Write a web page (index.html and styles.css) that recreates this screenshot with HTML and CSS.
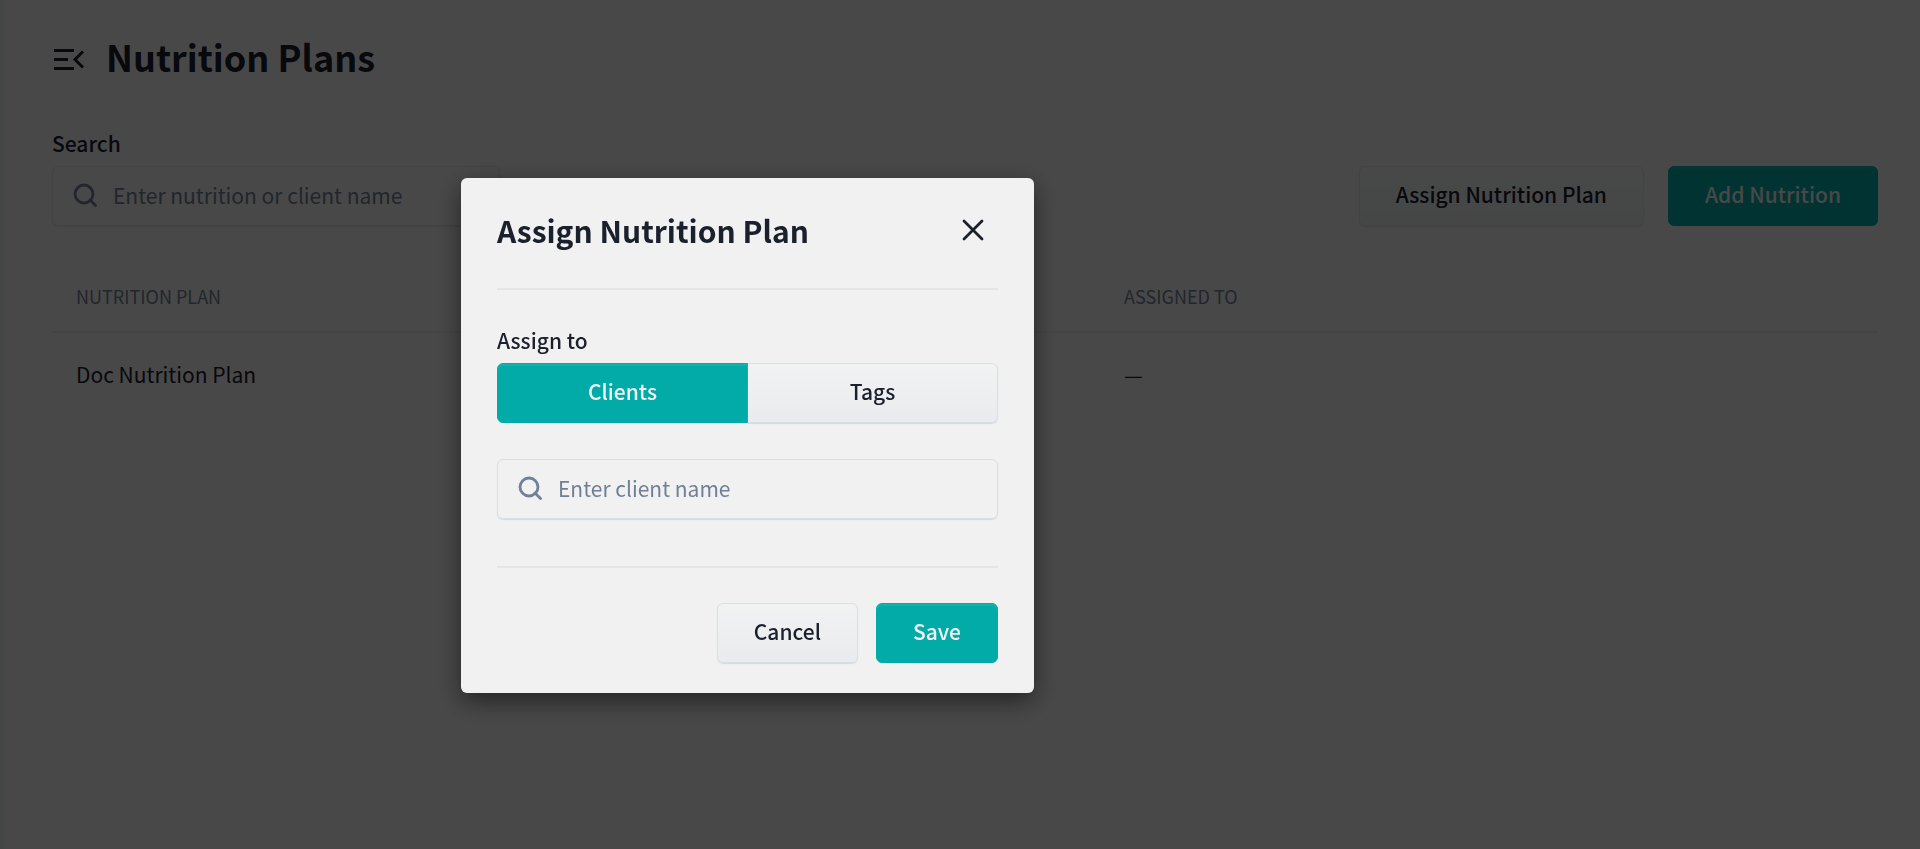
FILE: index.html
```html
<!DOCTYPE html>
<html lang="en">
<head>
    <meta charset="UTF-8">
    <meta name="viewport" content="width=device-width, initial-scale=1.0">
    <title>Nutrition Plans</title>
    <link rel="stylesheet" href="styles.css">
</head>
<body>

<main class="page">
    <header class="page-header">
        <button class="icon-button" aria-label="Toggle menu">
            <svg class="menu-icon" viewBox="0 0 30 22" fill="none" stroke="currentColor" stroke-width="3">
                <path d="M0 1.5h20M0 10.5h14M0 19.5h20"/>
                <path d="M29 2.5l-8 8 8 8"/>
            </svg>
        </button>
        <h1>Nutrition Plans</h1>
    </header>

    <div class="toolbar">
        <div class="search-field">
            <label class="label" for="planSearch">Search</label>
            <div class="input-group">
                <svg class="search-icon" viewBox="0 0 24 24" fill="none" stroke="currentColor" stroke-width="2.8">
                    <circle cx="11" cy="11" r="9"/>
                    <path d="M17 17l5.5 5.5" stroke-linecap="round"/>
                </svg>
                <input type="text" id="planSearch" placeholder="Enter nutrition or client name">
            </div>
        </div>
        <div class="actions">
            <button class="button">Assign Nutrition Plan</button>
            <button class="button button-primary">Add Nutrition</button>
        </div>
    </div>

    <table class="plans">
        <thead>
            <tr>
                <th>Nutrition Plan</th>
                <th>Assigned To</th>
            </tr>
        </thead>
        <tbody>
            <tr>
                <td>Doc Nutrition Plan</td>
                <td>—</td>
            </tr>
        </tbody>
    </table>
</main>

<div class="overlay">
    <div class="modal" role="dialog" aria-labelledby="modalTitle">
        <div class="modal-header">
            <h2 id="modalTitle">Assign Nutrition Plan</h2>
            <button class="icon-button close-button" aria-label="Close">
                <svg class="close-icon" viewBox="0 0 22 22" fill="none" stroke="currentColor" stroke-width="2.8" stroke-linecap="round">
                    <path d="M2 2l18 18M20 2L2 20"/>
                </svg>
            </button>
        </div>

        <div class="modal-body">
            <div class="label" id="assignLabel">Assign to</div>
            <div class="segmented" role="group" aria-labelledby="assignLabel">
                <button class="button button-primary">Clients</button>
                <button class="button">Tags</button>
            </div>
            <div class="input-group">
                <svg class="search-icon" viewBox="0 0 24 24" fill="none" stroke="currentColor" stroke-width="2.8">
                    <circle cx="11" cy="11" r="9"/>
                    <path d="M17 17l5.5 5.5" stroke-linecap="round"/>
                </svg>
                <input type="text" id="clientSearch" placeholder="Enter client name" aria-label="Client name">
            </div>
        </div>

        <div class="modal-footer">
            <button class="button">Cancel</button>
            <button class="button button-primary">Save</button>
        </div>
    </div>
</div>

</body>
</html>
```
FILE: styles.css
```css
* {
    box-sizing: border-box;
}

body {
    margin: 0;
    min-height: 100vh;
    background-color: #f1f1f1;
    border-left: 4px solid #e3ecea;
    color: #1a202c;
    font-family: "Noto Sans CJK SC", "Noto Sans", sans-serif;
    font-size: 21px;
    line-height: 30px;
}

h1, h2 {
    margin: 0;
    font-weight: 700;
}

h1 {
    padding-bottom: 8px;
    font-size: 36px;
    line-height: 36px;
}

h2 {
    font-size: 30px;
    line-height: 40px;
}

button, input {
    font: inherit;
    color: inherit;
}

.page {
    padding: 38px 42px 36px 48px;
}

.page-header {
    display: flex;
    align-items: center;
    gap: 22px;
}

.icon-button {
    display: flex;
    padding: 0;
    border: none;
    background: none;
    cursor: pointer;
}

.menu-icon {
    width: 30px;
    height: 22px;
    margin-left: 2px;
}

.toolbar {
    display: flex;
    justify-content: space-between;
    align-items: flex-end;
    margin-top: 46px;
}

.search-field {
    width: 448px;
}

.label {
    display: block;
    padding-bottom: 8px;
    font-weight: 500;
}

.input-group {
    display: flex;
    align-items: center;
    gap: 16px;
    height: 60px;
    padding: 0 20px 3px;
    border: 1px solid #d9dfe5;
    border-radius: 6px;
    box-shadow: 0 1px 1px #d5dae0;
}

.input-group input {
    flex: 1;
    min-width: 0;
    padding: 0;
    border: none;
    outline: none;
    background: none;
}

.input-group input::placeholder {
    color: #718096;
    opacity: 1;
}

.search-icon {
    width: 24px;
    height: 24px;
    color: #718096;
}

.actions {
    display: flex;
    gap: 24px;
}

.button {
    height: 60px;
    padding: 0 36px 4px;
    border: 1px solid #d9dfe5;
    border-radius: 6px;
    background: linear-gradient(#f1f2f2, #e9ebee);
    box-shadow: 0 1px 1px #d5dae0;
    font-weight: 500;
    cursor: pointer;
}

.button-primary {
    border-color: #02aba8;
    background: #02aba8;
    box-shadow: inset 0 2px 1px #14b1ad;
    color: #f1f1f1;
}

.plans {
    width: 100%;
    margin-top: 48px;
    border-collapse: collapse;
    table-layout: fixed;
    text-align: left;
}

.plans th {
    padding: 7px 24px 20px;
    border-bottom: 2px solid #e4e5e6;
    color: #718096;
    font-size: 18px;
    font-weight: 400;
    text-transform: uppercase;
}

.plans th:first-child {
    width: 57.4%;
}

.plans td {
    padding: 26px 24px;
}

.overlay {
    position: fixed;
    inset: 0;
    padding: 178px 0 0 461px;
    background-color: rgba(0, 0, 0, 0.7);
}

.modal {
    width: 573px;
    padding: 0 36px 30px;
    border-radius: 6px;
    background-color: #f1f1f1;
    box-shadow: 0 8px 24px rgba(0, 0, 0, 0.5);
}

.modal-header {
    display: flex;
    justify-content: space-between;
    align-items: center;
    padding: 32px 14px 38px 0;
    border-bottom: 2px solid #e4e5e6;
}

.close-icon {
    width: 22px;
    height: 22px;
}

.modal-body {
    padding: 35px 0 47px;
    border-bottom: 2px solid #e4e5e6;
}

.segmented {
    display: flex;
    margin-bottom: 36px;
}

.segmented .button {
    flex: 1;
}

.segmented .button:first-child {
    border-radius: 6px 0 0 6px;
}

.segmented .button:last-child {
    border-left: none;
    border-radius: 0 6px 6px 0;
}

.modal-footer {
    display: flex;
    justify-content: flex-end;
    gap: 18px;
    padding-top: 35px;
}
```
